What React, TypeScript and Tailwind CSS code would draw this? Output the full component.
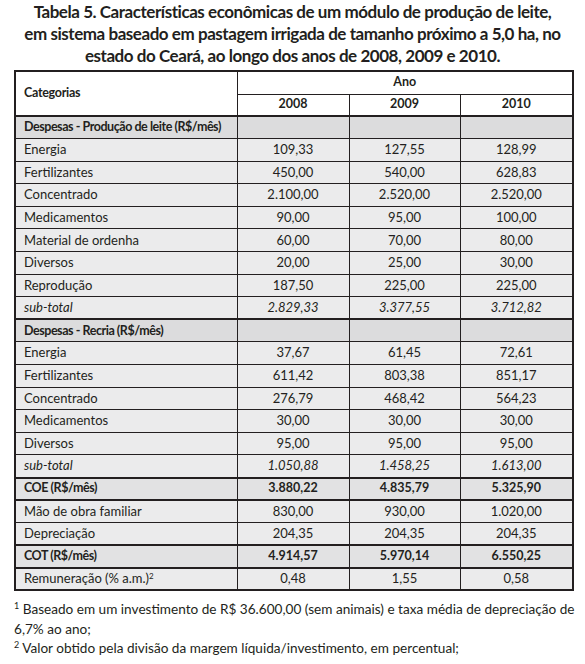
import React from "react";

type Row = {
  label: string;
  v?: [string, string, string];
  kind: "group" | "data" | "sub" | "total";
  thickTop?: boolean;
  sup?: string;
};

const rows: Row[] = [
  { label: "Despesas - Produção de leite (R$/mês)", kind: "group", thickTop: true },
  { label: "Energia", v: ["109,33", "127,55", "128,99"], kind: "data" },
  { label: "Fertilizantes", v: ["450,00", "540,00", "628,83"], kind: "data" },
  { label: "Concentrado", v: ["2.100,00", "2.520,00", "2.520,00"], kind: "data" },
  { label: "Medicamentos", v: ["90,00", "95,00", "100,00"], kind: "data" },
  { label: "Material de ordenha", v: ["60,00", "70,00", "80,00"], kind: "data" },
  { label: "Diversos", v: ["20,00", "25,00", "30,00"], kind: "data" },
  { label: "Reprodução", v: ["187,50", "225,00", "225,00"], kind: "data" },
  { label: "sub-total", v: ["2.829,33", "3.377,55", "3.712,82"], kind: "sub" },
  { label: "Despesas - Recria (R$/mês)", kind: "group", thickTop: true },
  { label: "Energia", v: ["37,67", "61,45", "72,61"], kind: "data" },
  { label: "Fertilizantes", v: ["611,42", "803,38", "851,17"], kind: "data" },
  { label: "Concentrado", v: ["276,79", "468,42", "564,23"], kind: "data" },
  { label: "Medicamentos", v: ["30,00", "30,00", "30,00"], kind: "data" },
  { label: "Diversos", v: ["95,00", "95,00", "95,00"], kind: "data" },
  { label: "sub-total", v: ["1.050,88", "1.458,25", "1.613,00"], kind: "sub" },
  { label: "COE (R$/mês)", v: ["3.880,22", "4.835,79", "5.325,90"], kind: "total", thickTop: true },
  { label: "Mão de obra familiar", v: ["830,00", "930,00", "1.020,00"], kind: "data", thickTop: true },
  { label: "Depreciação", v: ["204,35", "204,35", "204,35"], kind: "data" },
  { label: "COT (R$/mês)", v: ["4.914,57", "5.970,14", "6.550,25"], kind: "total", thickTop: true },
  { label: "Remuneração (% a.m.)", v: ["0,48", "1,55", "0,58"], kind: "data", thickTop: true, sup: "2" },
];

export default function App() {
  return (
    <div
      className="w-[585px] h-[664px] bg-white text-[#231f20] overflow-hidden"
      style={{ fontFamily: "Lato, 'Open Sans', sans-serif" }}
    >
      <div className="pt-[1px] text-center font-bold text-[17px] leading-[22px] tracking-[-0.45px]">
        <div>Tabela 5. Características econômicas de um módulo de produção de leite,</div>
        <div>em sistema baseado em pastagem irrigada de tamanho próximo a 5,0 ha, no</div>
        <div>estado do Ceará, ao longo dos anos de 2008, 2009 e 2010.</div>
      </div>
      <div className="pl-[14px] pt-[3px]">
        <table className="w-[558px] table-fixed border-collapse border-2 border-[#231f20] text-[13px]">
          <colgroup>
            <col className="w-[222px]" />
            <col className="w-[112px]" />
            <col className="w-[111px]" />
            <col className="w-[113px]" />
          </colgroup>
          <thead>
            <tr className="h-[23px] bg-white">
              <th
                rowSpan={2}
                className="text-left font-bold text-[12.5px] tracking-[-0.3px] pl-[8px] border border-[#231f20] align-middle"
              >
                Categorias
              </th>
              <th colSpan={3} className="font-bold text-[12.5px] border border-[#231f20] text-center">
                Ano
              </th>
            </tr>
            <tr className="h-[22px] bg-white">
              <th className="font-bold text-[12.5px] border border-[#231f20] text-center">2008</th>
              <th className="font-bold text-[12.5px] border border-[#231f20] text-center">2009</th>
              <th className="font-bold text-[12.5px] border border-[#231f20] text-center">2010</th>
            </tr>
          </thead>
          <tbody>
            {rows.map((r, i) => {
              const bg =
                r.kind === "group"
                  ? "bg-[#dcdcdd]"
                  : r.kind === "total"
                  ? "bg-[#e2e2e3]"
                  : "bg-[#ebebec]";
              const top = r.thickTop ? "border-t-2" : "";
              const labelCls =
                r.kind === "group" || r.kind === "total"
                  ? "font-bold text-[12.5px] tracking-[-0.45px]"
                  : r.kind === "sub"
                  ? "italic"
                  : "";
              const valCls =
                r.kind === "total" ? "font-bold text-[12.5px]" : r.kind === "sub" ? "italic" : "";
              return (
                <tr key={i} className={`h-[22.6px] ${bg}`}>
                  <td className={`pl-[8px] border border-[#231f20] ${top} ${labelCls} whitespace-nowrap`}>
                    {r.label}
                    {r.sup && (
                      <span className="text-[8px] leading-none align-[4px]">{r.sup}</span>
                    )}
                  </td>
                  {[0, 1, 2].map((j) => (
                    <td
                      key={j}
                      className={`text-center border border-[#231f20] ${top} ${valCls}`}
                    >
                      {r.v ? r.v[j] : ""}
                    </td>
                  ))}
                </tr>
              );
            })}
          </tbody>
        </table>
      </div>
      <div className="pl-[14px] pt-[9px] text-[13.6px] leading-[19.5px]">
        <div>
          <span className="text-[9px] leading-none align-[5px]">1</span> Baseado em um investimento de R$ 36.600,00 (sem animais) e taxa média de depreciação de
          <br />
          6,7% ao ano;
        </div>
        <div>
          <span className="text-[9px] leading-none align-[5px]">2</span> Valor obtido pela divisão da margem líquida/investimento, em percentual;
        </div>
      </div>
    </div>
  );
}
